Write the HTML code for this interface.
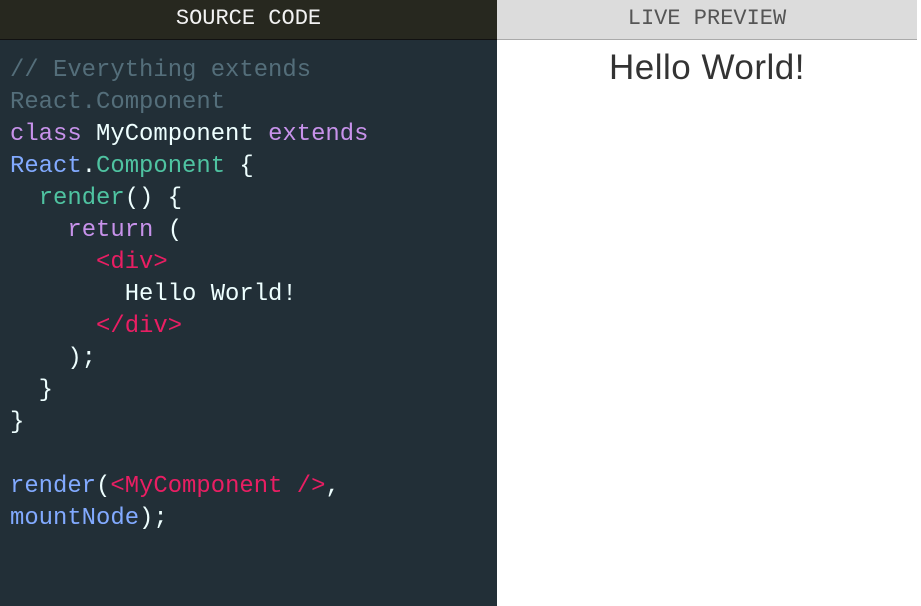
<!DOCTYPE html>
<html><head><meta charset="utf-8"><style>
html,body{margin:0;padding:0;width:921px;height:606px;overflow:hidden;background:#fff;}
.left{position:absolute;left:0;top:0;width:497px;height:606px;background:#222f37;}
.lh{position:absolute;left:0;top:0;width:497px;height:39px;background:#27281f;border-bottom:1px solid #111;color:#f2f2f2;font:22px "Liberation Mono",monospace;text-align:center;line-height:38px;}
.rh{position:absolute;left:497px;top:0;width:420px;height:39px;background:#dcdcdc;border-bottom:1px solid #aaa;color:#555;font:22px "Liberation Mono",monospace;text-align:center;line-height:38px;}
pre{position:absolute;left:10px;top:55px;margin:0;font:23.9px "Liberation Mono",monospace;line-height:32px;color:#eeffff;}
.c{color:#546e7a}.k{color:#c792ea}.b{color:#82aaff}.g{color:#4fc3a1}.t{color:#e91e63}
.hw{position:absolute;left:497px;top:48px;width:420px;text-align:center;font:35px "Liberation Sans",sans-serif;color:#333;letter-spacing:0.5px;}
</style></head><body>
<div class="left"></div>
<div class="lh">SOURCE CODE</div>
<div class="rh">LIVE PREVIEW</div>
<pre><span class="c">// Everything extends
React.Component</span>
<span class="k">class</span> MyComponent <span class="k">extends</span>
<span class="b">React</span>.<span class="g">Component</span> {
  <span class="g">render</span>() {
    <span class="k">return</span> (
      <span class="t">&lt;div&gt;</span>
        Hello World!
      <span class="t">&lt;/div&gt;</span>
    );
  }
}

<span class="b">render</span>(<span class="t">&lt;MyComponent /&gt;</span>,
<span class="b">mountNode</span>);</pre>
<div class="hw">Hello World!</div>
</body></html>
